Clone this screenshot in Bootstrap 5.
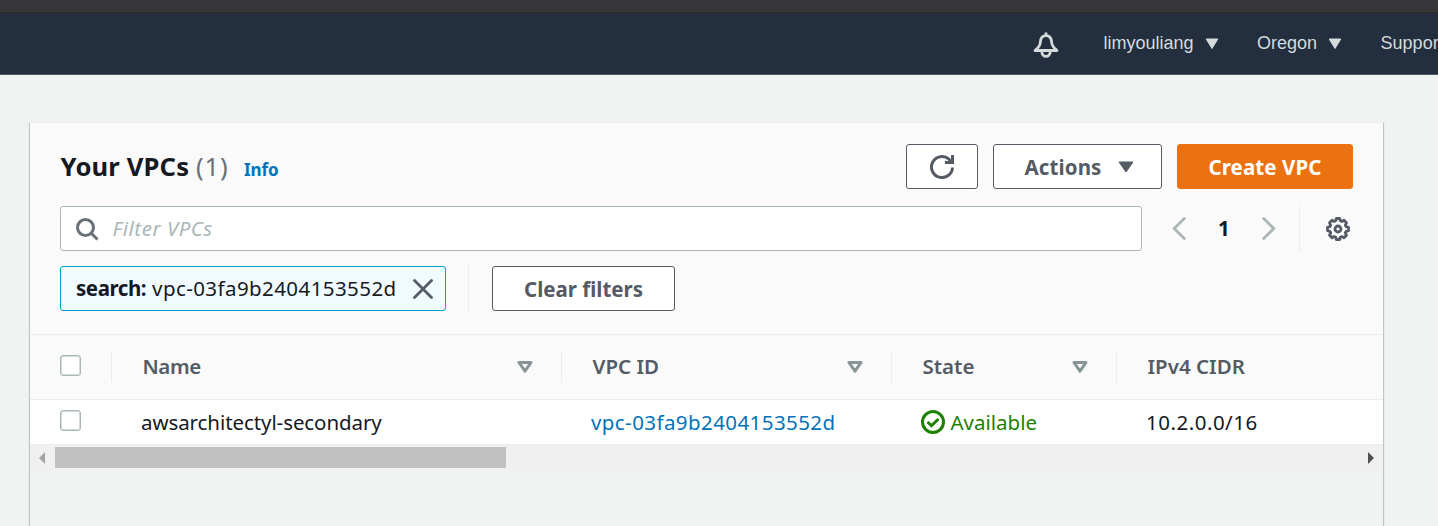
<!DOCTYPE html>
<html lang="en">
<head>
<meta charset="utf-8">
<title>Your VPCs</title>
<meta name="viewport" content="width=device-width, initial-scale=1">
<link href="https://cdn.jsdelivr.net/npm/bootstrap@5.3.0/dist/css/bootstrap.min.css" rel="stylesheet">
<style>
html{overflow:hidden}
body{font-family:"Noto Sans","Open Sans",sans-serif;font-size:20.5px;line-height:30px;color:#16191f;background:#f1f3f3;height:526px;overflow:hidden}
svg{display:block;flex:none}
.chrome-strip{height:13px;background:#363639;border-bottom:1px solid #29292b}
.topnav{height:62px;background:#232f3e;border-bottom:1px solid #545b64;font:18px/26px "Liberation Sans",Arial,sans-serif;color:#d5dbdb;padding-left:1033px;overflow:hidden;white-space:nowrap}
.topnav span{margin-top:-2px}
.topnav .bell{margin:3px 45px 0 -.5px}
.topnav .caret{margin:0 38.5px 0 11px}
.topnav .caret+span+.caret{margin:0 39px 0 10.5px}
.panel{width:1353px;height:410px;margin:47px 0 0 30px;box-shadow:0 1px 1px 0 rgba(0,28,36,.3),1px 1px 1px 0 rgba(0,28,36,.17),-1px 1px 1px 0 rgba(0,28,36,.17);border-top:1px solid #eaeded}
.panel-head{height:211px;background:#fafafa;padding:21px 30px 0}
.panel h1{font-size:25.6px;line-height:36px;font-weight:700;letter-spacing:.15px;padding:3px 0 0 .5px}
.panel h1 .count{color:#687078;font-weight:400;letter-spacing:.9px}
.panel h1 a{font-size:17px;letter-spacing:-.1px;color:#0073bb;margin-left:8.5px}
.awsbtn,.awsbtn:hover{height:45px;border:1px solid #545b64;border-radius:3px;background:#fff;color:#545b64;font-weight:700;font-size:20.5px;line-height:42px;padding:0;display:flex;align-items:center;justify-content:center}
.awsbtn.orange{width:176px;background:#ec7211;border-color:#ec7211;color:#fff;letter-spacing:.1px}
.filter{width:1082px;height:45px;border:1px solid #aab7b8;border-radius:3px;background:#fff;padding-left:15px;color:#aab7b8;font-style:italic;letter-spacing:.5px}
.filter span{margin-top:-2px}
.token{width:386px;height:45px;border:1px solid #00a1c9;border-radius:3px;background:#f1faff;padding:0 12px 0 15px}
.token b,.token span{margin-top:-2px}
.token b{letter-spacing:-.45px;margin-right:6px}
.ident{letter-spacing:.42px}
.rule{width:1px;height:45px;background:#eaeded}
.cols{display:grid;grid-template-columns:81px 450px 330px 225px 267px;align-items:center}
.cols-head{height:66px;background:#fafafa;border-top:1px solid #eaeded;border-bottom:1px solid #eaeded;color:#545b64;font-weight:600}
.cols-head>div{margin-top:-2px}
.cols-head>div:first-child{margin-top:-4px}
.cols-head>div+div{border-left:1px solid #eaeded;height:31px;padding:0 28px 0 30.5px;display:flex;align-items:center;justify-content:space-between}
.cols-body{height:44px;background:#fff}
.cols-body>div+div{padding-left:30px}
.cols-body>div:first-child{margin-top:-3px}
.link-id{color:#0073bb;text-decoration:none}
.ok{color:#1d8102}
.cbox{width:21px;height:21px;margin-left:30px;border:1px solid #aab7b8;box-shadow:inset 0 0 0 .5px #aab7b8;border-radius:3px;background:#fff}
.hscroll{height:26px;background:#f0f0f0;border-top:1px solid #eaeded;padding:0 9px}
.thumb{width:451px;height:21px;background:#c1c1c1;margin:0 auto 0 10px}
</style>
</head>
<body>
<div class="chrome-strip"></div>
<nav class="topnav d-flex align-items-center">
  <svg class="bell" width="26" height="27" viewBox="0 0 26 27" fill="none" stroke="#d5dbdb" stroke-width="2.800" stroke-linejoin="round"><path d="M13 .5v3M2 18.500h22c-3-2.500-5-4-5.300-8C18.400 6 16 3.700 13 3.700S7.600 6 7.300 10.500C7 14.500 5 16 2 18.500zM8.800 19.500a4.200 4.900 0 0 0 8.400 0"/></svg>
  <span>limyouliang</span>
  <svg class="caret" width="14" height="12"><path d="M1.200 1h11.600L7 10.500z" fill="#d5dbdb" stroke="#d5dbdb" stroke-linejoin="round"/></svg>
  <span>Oregon</span>
  <svg class="caret" width="14" height="12"><path d="M1.200 1h11.600L7 10.500z" fill="#d5dbdb" stroke="#d5dbdb" stroke-linejoin="round"/></svg>
  <span>Suppor</span>
</nav>
<main class="panel">
  <div class="panel-head">
    <div class="d-flex align-items-center" style="height:45px">
      <h1 class="mb-0 me-auto">Your VPCs <span class="count">(1)</span> <a class="text-decoration-none" href="#">Info</a></h1>
      <button class="btn awsbtn" style="width:72px" aria-label="Refresh"><svg width="24" height="24" viewBox="0 0 24 24" fill="none" stroke="#545b64" stroke-width="3"><path d="M22.500 12.500A10.500 10.500 0 1 1 19 4.200L21 7M22.500 0v7.500H15"/></svg></button>
      <button class="btn awsbtn" style="width:169px;margin:0 15px;letter-spacing:.1px"><span style="margin-left:4px">Actions</span><svg width="16" height="12" style="margin-left:17px"><path d="M1 1h14L8 11z" fill="#545b64" stroke="#545b64" stroke-linejoin="round"/></svg></button>
      <button class="btn awsbtn orange">Create VPC</button>
    </div>
    <div class="d-flex align-items-center" style="margin-top:17px">
      <div class="filter d-flex align-items-center"><svg width="23" height="23" viewBox="0 0 23 23" fill="none" stroke="#687078" stroke-width="3" style="margin:1px 13.500px 0 0"><circle cx="9.500" cy="9.500" r="8"/><path d="M15 15l6.500 6.500"/></svg><span>Filter VPCs</span></div>
      <svg width="14" height="23" fill="none" stroke="#aab7b8" stroke-width="2.800" stroke-linecap="round" style="margin-left:30px"><path d="M12.300 1.500L2.200 11.500l10.100 10"/></svg>
      <b style="margin:-1px 32px 0 32px">1</b>
      <svg width="14" height="23" fill="none" stroke="#aab7b8" stroke-width="2.800" stroke-linecap="round"><path d="M1.700 1.500l10.100 10-10.100 10"/></svg>
      <div class="rule" style="margin:0 26px 0 23.500px"></div>
      <svg width="24" height="24" viewBox="0 0 24 24" fill="none" stroke="#545b64" stroke-width="2.800" stroke-linejoin="round"><path d="M10.400 1.500h3.200l.7 2.200 1.600.7 2.100-1.100 2.500 2.500-1.200 2.200.8 1.600 2.400.8v3.200l-2.400.8-.8 1.600 1.200 2.200-2.500 2.500-2.100-1.100-1.600.7-.7 2.200h-3.200l-.7-2.200-1.600-.7L6 20.700l-2.500-2.500L4.700 16l-.8-1.600-2.400-.8v-3.200l2.400-.8L4.700 8 3.500 5.800 6 3.300l2.100 1.100 1.600-.7z"/><circle cx="12" cy="12" r="3"/></svg>
    </div>
    <div class="d-flex align-items-center" style="margin-top:15px">
      <div class="token d-flex align-items-center"><b>search:</b><span class="ident">vpc-03fa9b2404153552d</span><svg class="ms-auto" width="20" height="20" stroke="#545b64" stroke-width="2.800" stroke-linecap="round"><path d="M1.500 1.500l17 17M18.500 1.500l-17 17"/></svg></div>
      <div class="rule" style="margin:0 23px 0 22px"></div>
      <button class="btn awsbtn" style="width:183px">Clear filters</button>
    </div>
  </div>
  <div class="cols cols-head">
    <div><div class="cbox"></div></div>
    <div><span style="letter-spacing:-.4px">Name</span><svg width="16" height="13" fill="none" stroke="#879596" stroke-width="3" stroke-linejoin="round"><path d="M2 2.500h12L8 11.200z"/></svg></div>
    <div>VPC ID<svg width="16" height="13" fill="none" stroke="#879596" stroke-width="3" stroke-linejoin="round"><path d="M2 2.500h12L8 11.200z"/></svg></div>
    <div>State<svg width="16" height="13" fill="none" stroke="#879596" stroke-width="3" stroke-linejoin="round"><path d="M2 2.500h12L8 11.200z"/></svg></div>
    <div>IPv4 CIDR</div>
  </div>
  <div class="cols cols-body">
    <div><div class="cbox"></div></div>
    <div style="letter-spacing:-.08px">awsarchitectyl-secondary</div>
    <div><a class="link-id ident" href="#">vpc-03fa9b2404153552d</a></div>
    <div class="ok d-flex align-items-center"><svg width="24" height="24" fill="none" stroke="#1d8102" stroke-width="3" style="margin-right:5.500px"><circle cx="12" cy="12" r="10.500"/><path d="M6.500 12l4 3.700 7-6.700"/></svg>Available</div>
    <div style="letter-spacing:.5px">10.2.0.0/16</div>
  </div>
  <div class="hscroll d-flex align-items-center">
    <svg width="6" height="12"><path d="M6 0v12L0 6z" fill="#a3a3a3"/></svg>
    <div class="thumb"></div>
    <svg width="6" height="12"><path d="M0 0v12l6-6z" fill="#505050"/></svg>
  </div>
</main>
<script src="https://cdn.jsdelivr.net/npm/bootstrap@5.3.0/dist/js/bootstrap.bundle.min.js"></script>
</body>
</html>
